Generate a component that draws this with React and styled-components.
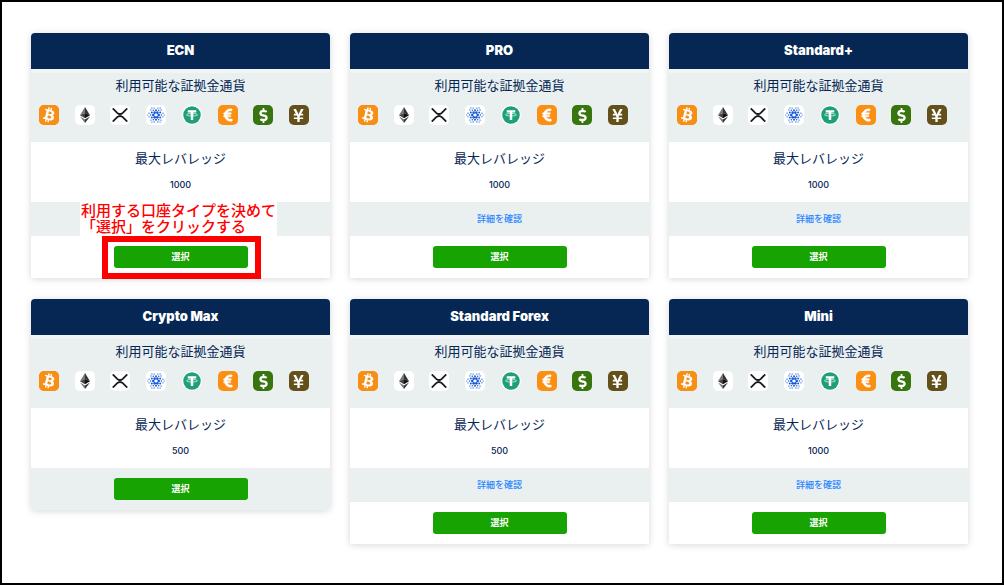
import React from "react";
import styled, { createGlobalStyle } from "styled-components";
import { FaDollarSign, FaEuroSign, FaYenSign } from "react-icons/fa";
import { SiBitcoin } from "react-icons/si";

const GlobalStyle = createGlobalStyle`
  *, *::before, *::after { box-sizing: border-box; }
  body {
    margin: 0;
    background: #fff;
    color: #062654;
    font-family: "Inter", "Noto Sans CJK JP", sans-serif;
  }
`;

const Page = styled.main`
  min-height: 100vh;
  padding: 31px 34px 31px 29px;
  border: 2px solid #000;
`;

const Grid = styled.div`
  display: grid;
  grid-template-columns: repeat(3, minmax(0, 1fr));
  gap: 21px 20px;
  align-items: start;
`;

const Card = styled.section`
  border-radius: 4px 4px ${(p) => (p.$rounded ? "4px 4px" : "0 0")};
  box-shadow: 0 1px 7px rgba(0, 0, 0, 0.16);
  text-align: center;
`;

const Title = styled.h2`
  margin: 0;
  padding-bottom: 2px;
  border-radius: 4px 4px 0 0;
  background: #062654;
  color: #fff;
  font-size: 13px;
  font-weight: 900;
  line-height: 34px;
`;

const Row = styled.div`
  position: relative;
  background: ${(p) => (p.$shaded ? "#eaf0f0" : "#fff")};
`;

const CurrencyRow = styled(Row)`
  padding: 2px 0 17px;
  border-top: 4px solid #f1f5f5;
`;

const LeverageRow = styled(Row)`
  padding: 6px 0 10px;
`;

const DetailRow = styled(Row)`
  display: flex;
  align-items: center;
  justify-content: center;
  height: 34px;
`;

const ActionRow = styled(Row)`
  display: flex;
  justify-content: center;
  padding: 10px 0;
  border-radius: ${(p) => (p.$shaded ? "0 0 4px 4px" : "0")};
`;

const Label = styled.h3`
  margin: 0;
  font-size: 13px;
  font-weight: 400;
  line-height: 20px;
`;

const Value = styled.p`
  margin: 9px 0 0;
  font-size: 9px;
  font-weight: 500;
  line-height: 15px;
`;

const Icons = styled.ul`
  display: flex;
  justify-content: space-between;
  margin: 10px 0 0;
  padding: 0 21px 0 8px;
  list-style: none;
`;

const Tile = styled.li`
  display: flex;
  align-items: center;
  justify-content: center;
  width: 20px;
  height: 20px;
  overflow: hidden;
  border-radius: ${(p) => (p.$round ? "10px" : "5px")};
  background: ${(p) => p.$bg};
  color: ${(p) => p.$fg};

  svg { display: block; flex: none; }
`;

const BitcoinMark = styled.span`
  display: flex;
  flex: none;
  border-radius: 50%;
  background: radial-gradient(circle, #fff 58%, transparent 60%);
`;

const DetailLink = styled.a`
  display: block;
  padding-bottom: 1px;
  color: #2a86ff;
  font-size: 9px;
  font-weight: 500;
  line-height: 14px;
  text-decoration: none;
`;

const ButtonWrap = styled.div`
  position: relative;
  width: 134px;
`;

const SelectButton = styled.button`
  display: block;
  width: 100%;
  height: 22px;
  padding: 0;
  border: 0;
  border-radius: 3px;
  background: #17a302;
  color: #fff;
  font: 700 9px/22px "Inter", "Noto Sans CJK JP", sans-serif;
  cursor: pointer;
`;

const Highlight = styled.span`
  position: absolute;
  inset: -10px -13px -11px -12px;
  border: 6px solid #f00;
  pointer-events: none;
`;

const Note = styled.p`
  position: absolute;
  top: 0;
  left: 49px;
  margin: 0;
  padding: 1px;
  background: #fff;
  color: #f00;
  font-size: 15px;
  font-weight: 500;
  line-height: 16px;
  text-align: left;
  white-space: nowrap;
`;

const Ethereum = () => (
  <svg width="10" height="16" viewBox="0 0 20 32" aria-hidden="true">
    <path d="M10 0 0 16.5 10 12Z" fill="#777" />
    <path d="M10 0 20 16.5 10 12Z" fill="#333" />
    <path d="M0 16.5 10 12V22.5Z" fill="#444" />
    <path d="M20 16.5 10 12V22.5Z" fill="#111" />
    <path d="M0 19 10 25V32Z" fill="#777" />
    <path d="M20 19 10 25V32Z" fill="#333" />
  </svg>
);

const Xrp = () => (
  <svg width="16" height="14" viewBox="0 0 32 28" fill="none" stroke="#171b20" strokeWidth="3.6" aria-hidden="true">
    <path d="M1.5 0.8 10.4 9.6Q16 14.6 21.6 9.6L30.5 0.8" />
    <path d="M1.5 27.2 10.4 18.4Q16 13.4 21.6 18.4L30.5 27.2" />
  </svg>
);

const dotRings = [
  { count: 6, distance: 3.3, size: 1.6, turn: 0 },
  { count: 6, distance: 5.9, size: 1.2, turn: 30 },
  { count: 6, distance: 6.6, size: 0.9, turn: 0 },
  { count: 12, distance: 8.8, size: 0.8, turn: 15 },
  { count: 6, distance: 10, size: 0.7, turn: 0 },
];

const Cardano = () => (
  <svg width="18" height="18" viewBox="-11 -11 22 22" fill="#1559d6" aria-hidden="true">
    {dotRings.map((ring) =>
      Array.from({ length: ring.count }, (_, i) => {
        const angle = ((i * 360) / ring.count + ring.turn) * (Math.PI / 180);
        return (
          <circle
            key={`${ring.distance}-${i}`}
            cx={ring.distance * Math.cos(angle)}
            cy={ring.distance * Math.sin(angle)}
            r={ring.size}
          />
        );
      })
    )}
  </svg>
);

const Tether = () => (
  <svg width="18" height="18" viewBox="0 0 36 36" aria-hidden="true">
    <circle cx="18" cy="18" r="17.5" fill="#1d9f78" />
    <path d="M9.5 8.5H26.5V13H20.5V28H15.5V13H9.5Z" fill="#fff" />
    <ellipse cx="18" cy="17.5" rx="11" ry="2.6" fill="none" stroke="#fff" strokeWidth="1.3" />
  </svg>
);

const currencies = [
  {
    name: "Bitcoin",
    bg: "#f78f16",
    fg: "#f78f16",
    icon: <BitcoinMark><SiBitcoin size={24} /></BitcoinMark>,
  },
  { name: "Ethereum", bg: "#fff", fg: "#222", icon: <Ethereum /> },
  { name: "XRP", bg: "#fff", fg: "#171b20", icon: <Xrp /> },
  { name: "Cardano", bg: "#fff", fg: "#1559d6", icon: <Cardano /> },
  { name: "Tether", bg: "#fff", fg: "#1d9f78", icon: <Tether />, round: true },
  { name: "Euro", bg: "#fb8f14", fg: "#fff", icon: <FaEuroSign size={14} stroke="#fff" strokeWidth={24} /> },
  { name: "US Dollar", bg: "#39750f", fg: "#fff", icon: <FaDollarSign size={15} /> },
  { name: "Yen", bg: "#63501a", fg: "#fff", icon: <FaYenSign size={15} /> },
];

const accounts = [
  { name: "ECN", leverage: 1000, details: true, guided: true },
  { name: "PRO", leverage: 1000, details: true },
  { name: "Standard+", leverage: 1000, details: true },
  { name: "Crypto Max", leverage: 500, details: false },
  { name: "Standard Forex", leverage: 500, details: true },
  { name: "Mini", leverage: 1000, details: true },
];

function AccountCard({ name, leverage, details, guided }) {
  return (
    <Card $rounded={!details}>
      <Title>{name}</Title>
      <CurrencyRow $shaded>
        <Label>利用可能な証拠金通貨</Label>
        <Icons>
          {currencies.map((c) => (
            <Tile key={c.name} title={c.name} $bg={c.bg} $fg={c.fg} $round={c.round}>
              {c.icon}
            </Tile>
          ))}
        </Icons>
      </CurrencyRow>
      <LeverageRow>
        <Label>最大レバレッジ</Label>
        <Value>{leverage}</Value>
      </LeverageRow>
      {details && (
        <DetailRow $shaded>
          {guided ? (
            <Note>
              利用する口座タイプを決めて
              <br />
              「選択」をクリックする
            </Note>
          ) : (
            <DetailLink href="#details">詳細を確認</DetailLink>
          )}
        </DetailRow>
      )}
      <ActionRow $shaded={!details}>
        <ButtonWrap>
          <SelectButton type="button">選択</SelectButton>
          {guided && <Highlight />}
        </ButtonWrap>
      </ActionRow>
    </Card>
  );
}

export default function App() {
  return (
    <>
      <GlobalStyle />
      <Page>
        <Grid>
          {accounts.map((account) => (
            <AccountCard key={account.name} {...account} />
          ))}
        </Grid>
      </Page>
    </>
  );
}
